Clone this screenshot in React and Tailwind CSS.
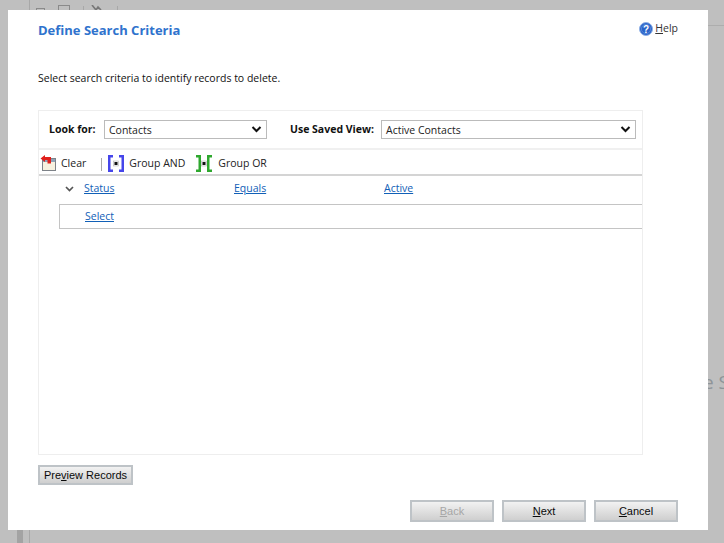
import React from "react";

const segoe = "font-['Open_Sans','Noto_Sans',sans-serif]";

const Chevron = () => (
  <svg width="11" height="7" viewBox="0 0 11 7" fill="none">
    <path d="M1.5 1l4 4 4-4" stroke="#111" strokeWidth="2" />
  </svg>
);

const ClearIcon = () => (
  <svg width="18" height="18" viewBox="0 0 18 18" className="mb-[1px] shrink-0">
    <rect x="3.5" y="4.5" width="13" height="12" fill="#f7f1df" stroke="#7d8288" />
    <rect x="4" y="5" width="12" height="3" fill="#8fa3b8" />
    <path d="M6 1L1.5 4.5 6 8V6h2.5v3.5H12V3H6z" fill="#e0201c" />
  </svg>
);

const AndIcon = () => (
  <svg width="16" height="17" viewBox="0 0 16 17" className="shrink-0">
    <path d="M5 1.25H1.25v14.5H5M11 1.25h3.75v14.5H11" fill="none" stroke="#4646ea" strokeWidth="2.5" />
    <rect x="5.5" y="6" width="5" height="5" fill="#f4f4f4" stroke="#aaa" strokeWidth="0.5" />
    <rect x="6.5" y="7" width="3" height="3" fill="#111" />
  </svg>
);

const OrIcon = () => (
  <svg width="16" height="17" viewBox="0 0 16 17" className="shrink-0">
    <path d="M0 1.25h3.75v14.5H0M16 1.25h-3.75v14.5H16" fill="none" stroke="#2ea82e" strokeWidth="2.5" />
    <rect x="5.5" y="6" width="5" height="5" fill="#f4f4f4" stroke="#aaa" strokeWidth="0.5" />
    <rect x="6.5" y="7" width="3" height="3" fill="#111" />
  </svg>
);

const HelpIcon = () => (
  <svg width="14" height="14" viewBox="0 0 14 14" className="shrink-0">
    <circle cx="7" cy="7" r="6.5" fill="#2a63c9" stroke="#8fb0e6" />
    <circle cx="7" cy="7" r="4.6" fill="none" stroke="#6f9be0" strokeWidth="0.6" />
    <text x="7" y="10.5" textAnchor="middle" fontSize="10" fontWeight="700" fill="#fff" fontFamily="Liberation Sans">?</text>
  </svg>
);

const Link = ({ children, className = "" }) => (
  <a className={`text-[10.5px] text-[#1160b7] underline ${className}`}>{children}</a>
);

const Btn = ({ children, disabled, className = "" }) => (
  <button
    className={`border-2 border-[#bec3c7] bg-gradient-to-b from-[#f2f2f2] to-[#cfcfcf] font-['Liberation_Sans',sans-serif] text-[11px] ${
      disabled ? "text-[#a6a6a6]" : "text-[#0a0a0a]"
    } ${className}`}
  >
    {children}
  </button>
);

const Select = ({ value, className = "" }) => (
  <div className={`flex h-[19px] items-center justify-between border border-[#bbbbbb] bg-white pl-[4px] pr-[4px] text-[10.5px] text-[#222] ${className}`}>
    <span className="mt-[2px]">{value}</span>
    <Chevron />
  </div>
);

export default function App() {
  return (
    <div className={`relative h-[543px] w-[724px] overflow-hidden bg-[#bfbfbf] pl-[8px] pt-[10px] ${segoe}`}>
      {/* page behind the dialog */}
      <div className="absolute bottom-0 left-[17px] h-[13px] w-[6px] bg-[#a3a3a3]" />
      <div className="absolute bottom-0 left-[29px] h-[13px] w-px bg-[#a8a8a8]" />
      <div className="absolute right-0 top-[25px] h-px w-[16px] bg-[#adadad]" />
      <div className="absolute left-[29px] top-0 h-[10px] w-px bg-[#a8a8a8]" />
      <div className="absolute left-[83px] top-[6px] h-[4px] w-px bg-[#a8a8a8]" />
      <div className="absolute left-[117px] top-[6px] h-[4px] w-px bg-[#a8a8a8]" />
      <div className="absolute left-[36px] top-[8px] h-[2px] w-[9px] border border-b-0 border-[#8a8a8a]" />
      <div className="absolute left-[58px] top-[5px] h-[5px] w-[12px] border border-b-0 border-[#8a8a8a]" />
      <svg className="absolute left-[91px] top-[5px]" width="14" height="5" viewBox="0 0 14 5" fill="none">
        <path d="M1 0l4 5M5 5l2-3 3 3" stroke="#777" strokeWidth="1.6" />
      </svg>
      <div className="absolute left-[703px] top-[368px] whitespace-nowrap text-[19px] leading-[28px] text-[#8e9498]">e S</div>

      <div className="relative flex h-[520px] w-[700px] flex-col bg-white px-[30px]">
        <div className="flex h-[40px] items-center justify-between pt-[1px]">
          <h1 className="text-[13px] font-bold text-[#2f73cd]">Define Search Criteria</h1>
          <div className="mb-[3px] flex items-center gap-[2px] text-[10.5px] text-[#333]">
            <HelpIcon />
            <span><u>H</u>elp</span>
          </div>
        </div>

        <p className="mt-[18px] text-[10.5px] leading-[20px] text-[#111]">
          Select search criteria to identify records to delete.
        </p>

        <div className="mt-[22px] flex h-[345px] w-[605px] flex-col border border-[#eeeeee]">
          <div className="flex h-[39px] shrink-0 items-center border-b-2 border-[#f0f0f0] pl-[10px]">
            <span className="w-[55px] text-[10.5px] font-bold text-[#111]">Look for:</span>
            <Select value="Contacts" className="w-[163px]" />
            <span className="ml-[23px] w-[91px] text-[10.5px] font-bold text-[#111]">Use Saved View:</span>
            <Select value="Active Contacts" className="w-[255px]" />
          </div>

          <div className="flex h-[26px] shrink-0 items-center border-b-2 border-[#d4d4d4] pt-[3px] text-[10.5px] text-[#222]">
            <ClearIcon />
            <span className="ml-[4px] mt-[1px]">Clear</span>
            <span className="ml-[15px] mt-[2px] h-[13px] w-px bg-[#aaaaaa]" />
            <span className="ml-[6px]"><AndIcon /></span>
            <span className="ml-[5px] mt-[1px]">Group AND</span>
            <span className="ml-[11px]"><OrIcon /></span>
            <span className="ml-[6px] mt-[1px]">Group OR</span>
          </div>

          <div className="flex h-[28px] shrink-0 items-center pb-[2px]">
            <svg width="9" height="6" viewBox="0 0 9 6" fill="none" className="ml-[26px]">
              <path d="M1 1l3.5 3.5L8 1" stroke="#555" strokeWidth="1.7" />
            </svg>
            <Link className="ml-[10px] w-[150px]">Status</Link>
            <Link className="w-[150px]">Equals</Link>
            <Link>Active</Link>
          </div>

          <div className="ml-[20px] flex h-[25px] shrink-0 items-center border-y border-l border-[#c4c4c4] pl-[25px]">
            <Link>Select</Link>
          </div>
        </div>

        <div className="mt-[10px] flex">
          <Btn className="h-[20px] w-[95px]">Pre<u>v</u>iew Records</Btn>
        </div>

        <div className="mt-[15px] flex justify-end gap-[8px]">
          <Btn disabled className="h-[22px] w-[84px]"><u>B</u>ack</Btn>
          <Btn className="h-[22px] w-[84px]"><u>N</u>ext</Btn>
          <Btn className="h-[22px] w-[84px]"><u>C</u>ancel</Btn>
        </div>
      </div>
    </div>
  );
}
